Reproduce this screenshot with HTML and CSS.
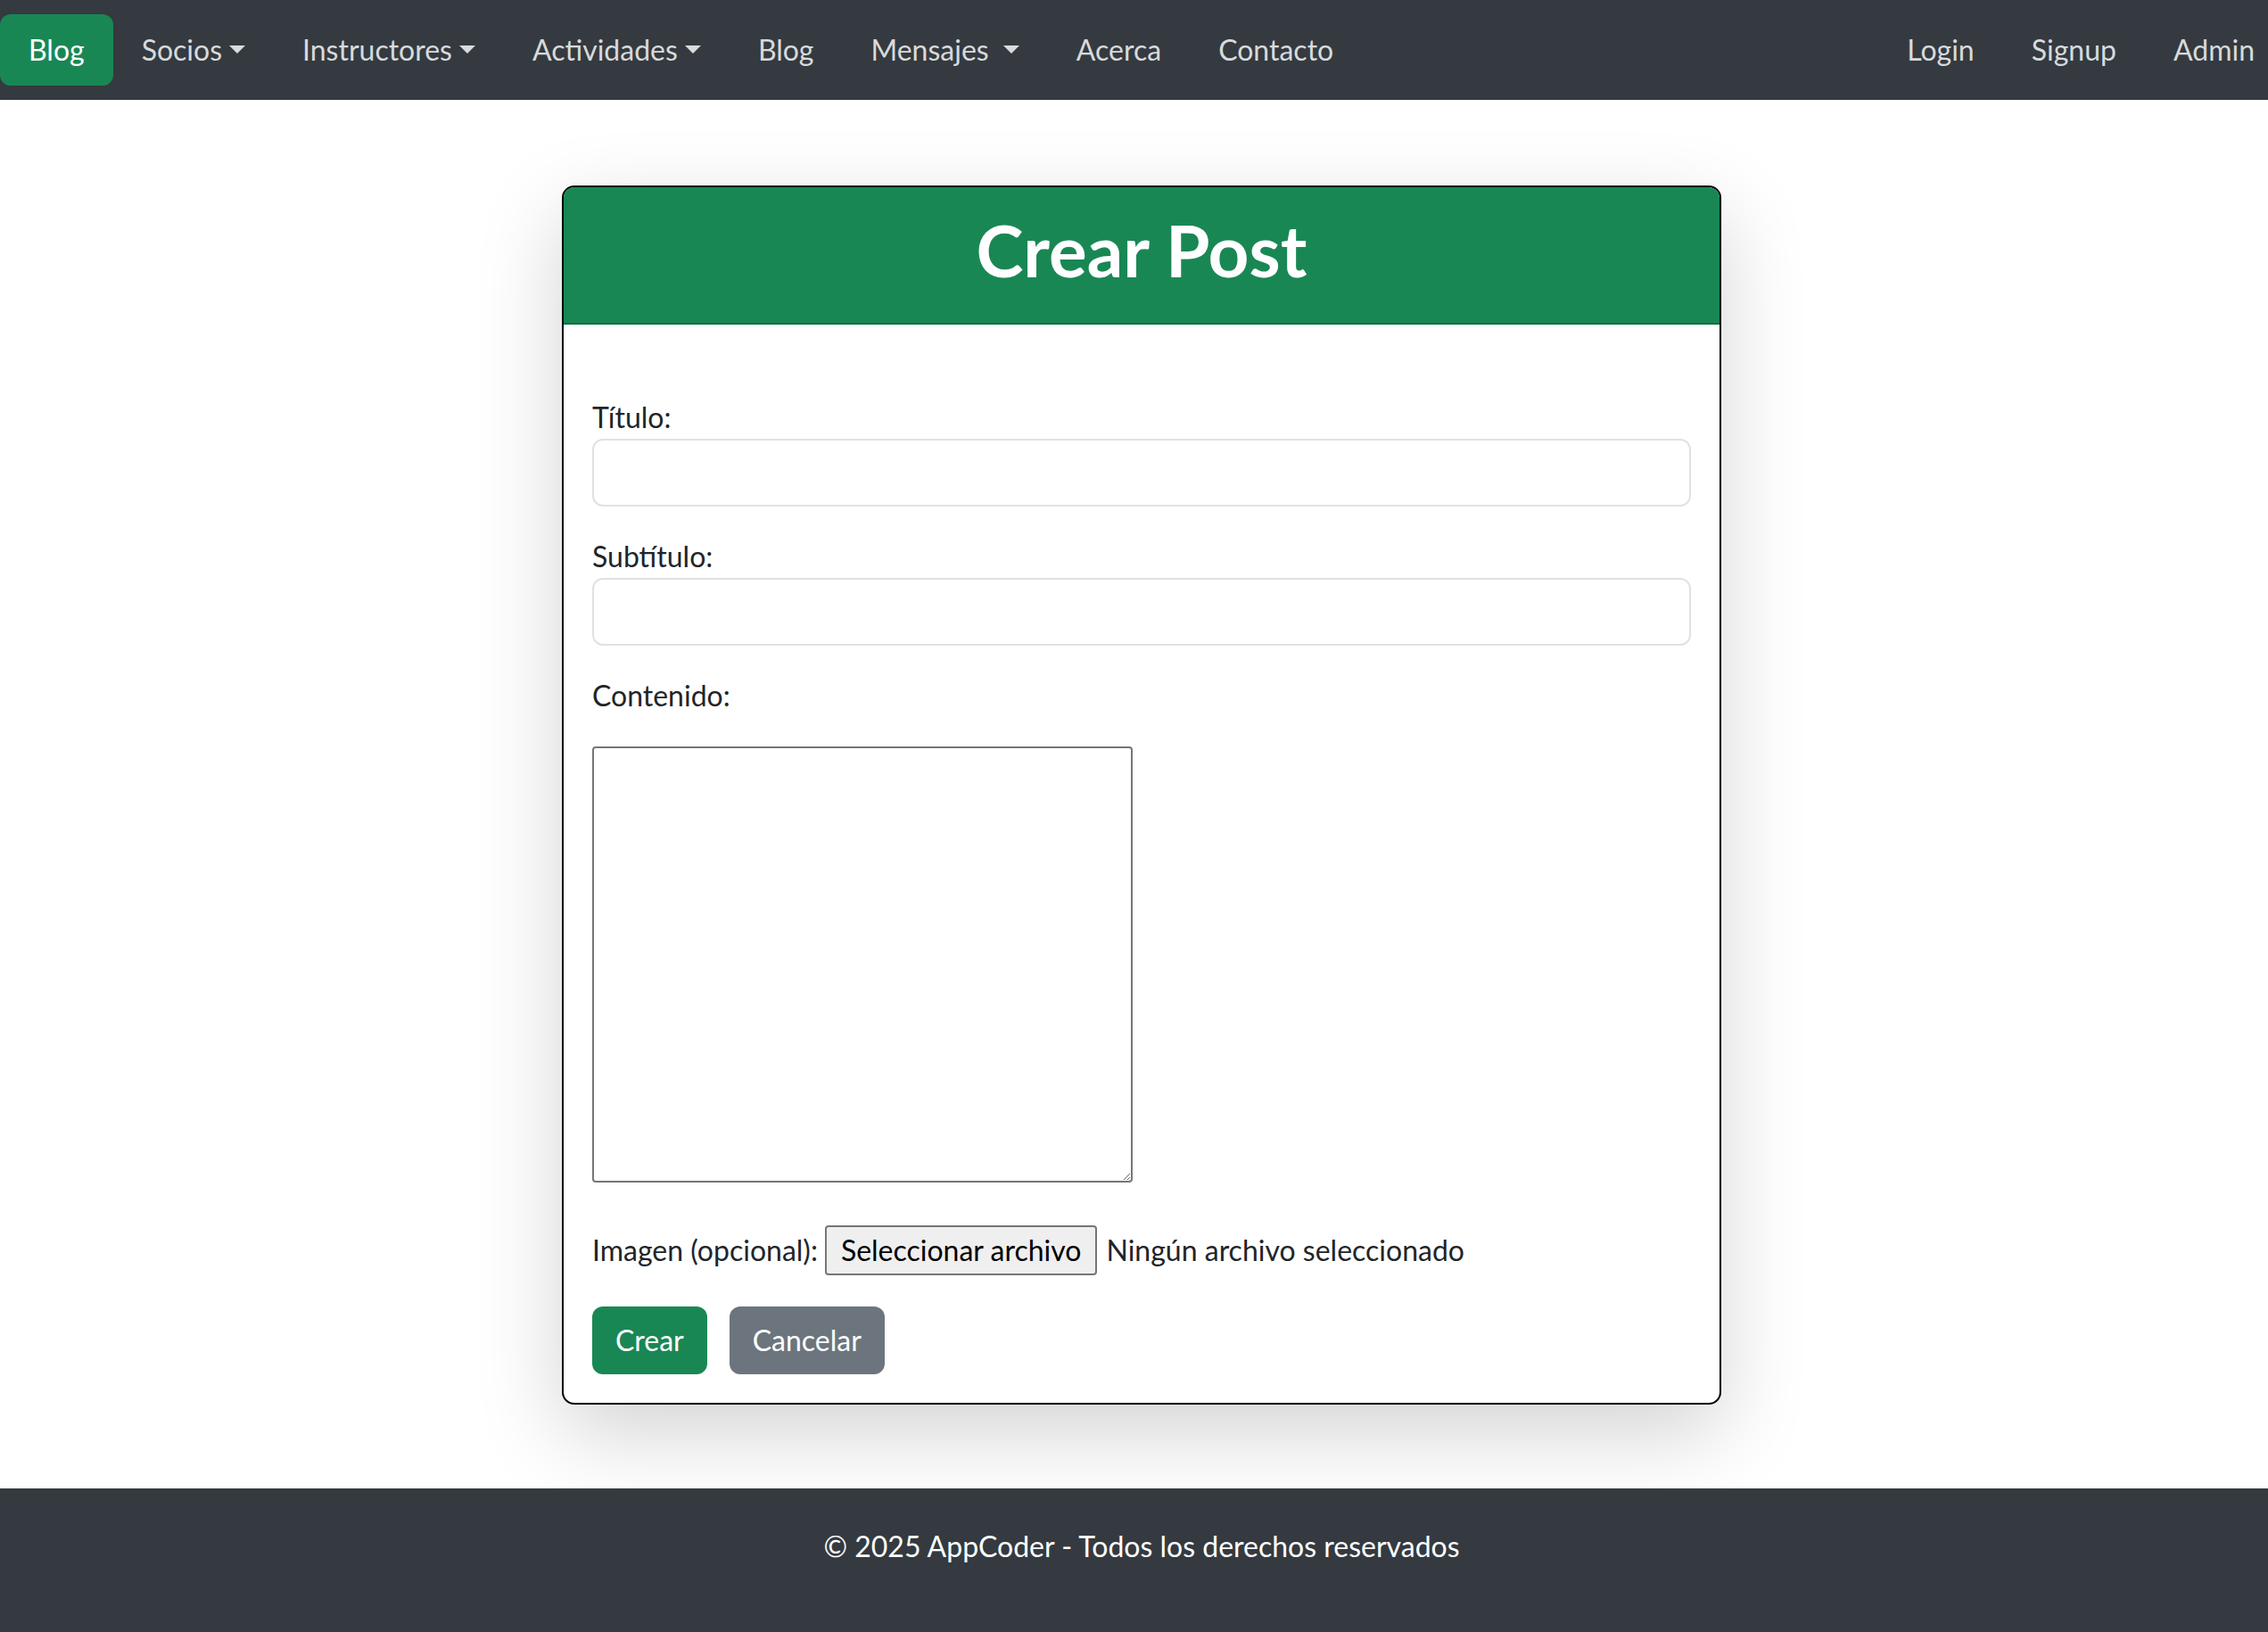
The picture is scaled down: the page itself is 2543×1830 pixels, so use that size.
FILE: index.html
```html
<!DOCTYPE html>
<html lang="es">
<head>
<meta charset="utf-8">
<title>Crear Post</title>
<link rel="stylesheet" href="styles.css">
</head>
<body>
<div class="page">
  <nav class="navbar">
    <ul class="nav-list">
      <li><a class="nav-link active" href="#">Blog</a></li>
      <li><a class="nav-link" href="#">Socios<span class="caret"></span></a></li>
      <li><a class="nav-link" href="#">Instructores<span class="caret"></span></a></li>
      <li><a class="nav-link" href="#">Actividades<span class="caret"></span></a></li>
      <li><a class="nav-link" href="#">Blog</a></li>
      <li><a class="nav-link" href="#">Mensajes <span class="caret"></span></a></li>
      <li><a class="nav-link" href="#">Acerca</a></li>
      <li><a class="nav-link" href="#">Contacto</a></li>
    </ul>
    <ul class="nav-list">
      <li><a class="nav-link" href="#">Login</a></li>
      <li><a class="nav-link" href="#">Signup</a></li>
      <li><a class="nav-link" href="#">Admin</a></li>
    </ul>
  </nav>

  <main class="main">
    <section class="card">
      <header class="card-header">
        <h1 class="card-title">Crear Post</h1>
      </header>
      <div class="card-body">
        <form class="post-form">
          <div class="field">
            <label class="field-label" for="titulo">Título:</label>
            <input id="titulo" class="form-control" type="text">
          </div>
          <div class="field">
            <label class="field-label" for="subtitulo">Subtítulo:</label>
            <input id="subtitulo" class="form-control" type="text">
          </div>
          <div class="field field-content">
            <label class="field-label" for="contenido">Contenido:</label>
            <textarea id="contenido" class="content-area"></textarea>
          </div>
          <div class="file-row">
            <span class="file-label">Imagen (opcional):</span>
            <button type="button" class="file-btn">Seleccionar archivo</button>
            <span class="file-name">Ningún archivo seleccionado</span>
          </div>
          <div class="actions">
            <button type="submit" class="btn btn-success">Crear</button>
            <button type="button" class="btn btn-secondary">Cancelar</button>
          </div>
        </form>
      </div>
    </section>
  </main>

  <footer class="footer">
    <p class="footer-text">© 2025 AppCoder - Todos los derechos reservados</p>
  </footer>
</div>
</body>
</html>
```

FILE: styles.css
```css
html {
  overflow: hidden;
}

body {
  margin: 0;
  font-family: Lato, "Open Sans", "Liberation Sans", sans-serif;
  font-size: 32px;
  line-height: 48px;
  color: #212529;
  background: #fff;
}

.page {
  width: 2560px;
  min-height: 1830px;
  display: flex;
  flex-direction: column;
}

/* Navbar */
.navbar {
  background: #343a40;
  height: 112px;
  box-sizing: border-box;
  padding: 16px 0;
  display: flex;
  justify-content: space-between;
  align-items: center;
}

.nav-list {
  display: flex;
  list-style: none;
  margin: 0;
  padding: 0;
}

.nav-link {
  display: block;
  padding: 16px 32px;
  color: rgba(255, 255, 255, 0.82);
  text-decoration: none;
  border-radius: 12px;
  white-space: nowrap;
}

.nav-link.active {
  background: #198754;
  color: #fff;
}

.caret {
  display: inline-block;
  margin-left: 8px;
  vertical-align: 8px;
  border-top: 9.6px solid;
  border-left: 9.6px solid transparent;
  border-right: 9.6px solid transparent;
  border-bottom: 0;
}

/* Main */
.main {
  flex: 1;
  padding: 96px 0 94px;
  display: flex;
  justify-content: center;
  align-items: flex-start;
}

.card {
  width: 1300px;
  box-sizing: border-box;
  border: 2px solid #000;
  border-radius: 14px;
  background: #fff;
  box-shadow: 0 32px 96px rgba(0, 0, 0, 0.175);
  overflow: hidden;
}

.card-header {
  background: #198754;
  color: #fff;
  padding: 22px 32px 34px;
  border-bottom: 2px solid rgba(0, 0, 0, 0.175);
  text-align: center;
}

.card-title {
  margin: 0;
  font-size: 80px;
  line-height: 96px;
  font-weight: 700;
}

.card-body {
  padding: 32px;
}

.post-form {
  padding-top: 48px;
  display: flex;
  flex-direction: column;
}

.field {
  margin-bottom: 32px;
}

.field-content {
  margin-bottom: 48px;
}

.field-label {
  display: block;
}

.form-control {
  display: block;
  width: 100%;
  height: 76px;
  box-sizing: border-box;
  margin: 0;
  padding: 12px 24px;
  border: 2px solid #dee2e6;
  border-radius: 12px;
  font: inherit;
  color: #212529;
  background: #fff;
}

.content-area {
  display: block;
  width: 606px;
  height: 489px;
  box-sizing: border-box;
  margin: 33px 0 0;
  padding: 4px;
  border: 2px solid #767676;
  border-radius: 4px;
  font: inherit;
  background: #fff;
}

.file-row {
  display: flex;
  align-items: center;
  height: 56px;
  margin-bottom: 35px;
}

.file-btn {
  margin-left: 8px;
  height: 56px;
  padding: 0 16px;
  border: 2px solid #767676;
  border-radius: 4px;
  background: #efefef;
  color: #000;
  font: inherit;
}

.file-name {
  margin-left: 10px;
}

.actions {
  display: flex;
  gap: 25px;
}

.btn {
  height: 76px;
  padding: 0 24px;
  border: 2px solid transparent;
  border-radius: 12px;
  color: #fff;
  font: inherit;
}

.btn-success {
  background: #198754;
}

.btn-secondary {
  background: #6c757d;
}

/* Footer */
.footer {
  background: #343a40;
  color: #fff;
  text-align: center;
  height: 161px;
  box-sizing: border-box;
  padding-top: 41px;
}

.footer-text {
  margin: 0;
}
```
